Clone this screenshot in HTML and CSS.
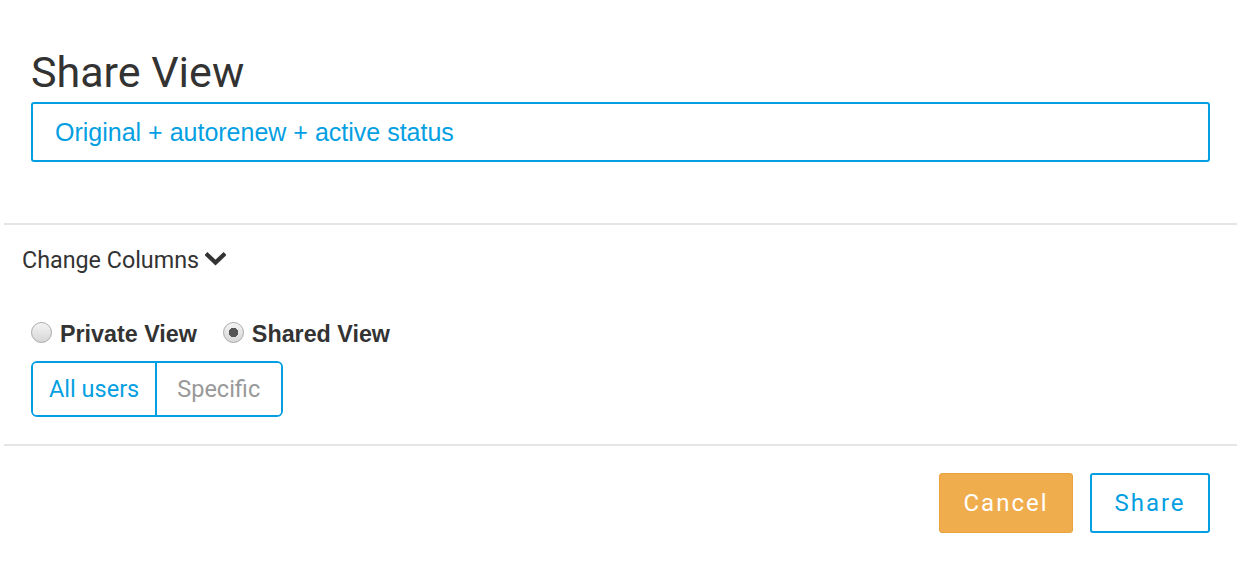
FILE: index.html
```html
<!DOCTYPE html>
<html lang="en">
<head>
    <meta charset="UTF-8">
    <meta name="viewport" content="width=device-width, initial-scale=1.0">
    <title>Share View</title>
<link rel="stylesheet" href="styles.css">
</head>
<body>
    <div class="modal">
        <div class="modal-header">
            <h1 class="titulo">Share View</h1>
            <input class="nombre" type="text" value="Original + autorenew + active status">
        </div>
        <div class="modal-body">
            <a class="columnas" href="#">Change Columns
                <svg class="chevron" width="21" height="14" viewBox="0 0 21 14">
                    <path d="M2.5 3 L10.5 10.5 L18.5 3" fill="none" stroke="#333" stroke-width="4.2" stroke-linecap="square"/>
                </svg>
            </a>
            <div class="visibilidad">
                <label class="opcion"><input type="radio" name="vista"> Private View</label>
                <label class="opcion"><input type="radio" name="vista" checked> Shared View</label>
            </div>
            <div class="grupo">
                <button class="grupo-btn activo">All users</button>
                <button class="grupo-btn">Specific</button>
            </div>
        </div>
        <div class="modal-footer">
            <button class="btn btn-cancel">Cancel</button>
            <button class="btn btn-share">Share</button>
        </div>
    </div>
</body>
</html>
```

FILE: styles.css
```css
* {
    box-sizing: border-box;
}
body {
    margin: 0;
    background-color: white;
    font-family: Roboto, Arial, sans-serif;
    color: #333333;
}
.modal {
    width: 1233px;
    margin-left: 4px;
}
.modal-header {
    padding: 47px 27px 61px 27px;
    border-bottom: 2px solid #e5e5e5;
}
.titulo {
    margin: 0 0 5px 0;
    font-size: 43px;
    font-weight: 400;
    line-height: 50px;
}
.nombre {
    display: block;
    width: 100%;
    height: 60px;
    padding: 0 22px;
    border: 2px solid #049fe2;
    border-radius: 3px;
    font-family: "Liberation Sans", Arial, sans-serif;
    font-size: 25px;
    color: #049fe2;
    outline: none;
}
.modal-body {
    padding: 20px 27px 27px 27px;
    border-bottom: 2px solid #e5e5e5;
}
.columnas {
    display: inline-flex;
    align-items: center;
    gap: 6px;
    margin-left: -9px;
    font-size: 23.3px;
    line-height: 30px;
    color: #333333;
    text-decoration: none;
}
.chevron {
    margin-top: -2px;
}
.visibilidad {
    display: flex;
    gap: 26px;
    margin-top: 44px;
    font-family: "Liberation Sans", Arial, sans-serif;
    font-size: 23.3px;
    font-weight: bold;
    line-height: 30px;
}
.opcion {
    display: flex;
    align-items: center;
    gap: 8px;
}
.opcion input {
    appearance: none;
    width: 21px;
    height: 21px;
    margin: -4px 0 0 0;
    border: 1px solid #a8a8a8;
    border-radius: 50%;
    background: linear-gradient(#f4f4f4, #d6d6d6);
}
.opcion input:checked {
    background: radial-gradient(circle, #555555 0, #555555 4.5px, transparent 5px), linear-gradient(#f4f4f4, #d6d6d6);
}
.grupo {
    display: inline-flex;
    margin-top: 12px;
    border: 2px solid #049fe2;
    border-radius: 6px;
    overflow: hidden;
}
.grupo-btn {
    height: 52px;
    padding: 0 16px 0 16px;
    border: none;
    background-color: white;
    font-family: Roboto, Arial, sans-serif;
    font-size: 23.5px;
    color: #999999;
}
.grupo-btn + .grupo-btn {
    border-left: 2px solid #049fe2;
    padding: 0 21px 0 20px;
}
.grupo-btn.activo {
    color: #049fe2;
}
.modal-footer {
    display: flex;
    justify-content: flex-end;
    gap: 17px;
    padding: 27px 27px;
}
.btn {
    height: 60px;
    padding: 0 22px;
    border-radius: 3px;
    font-family: Roboto, Arial, sans-serif;
    font-size: 24px;
    letter-spacing: 2px;
}
.btn-cancel {
    width: 134px;
    border: 1px solid #eaa23e;
    background-color: #f0ad4e;
    color: white;
}
.btn-share {
    width: 120px;
    border: 2px solid #049fe2;
    background-color: white;
    color: #049fe2;
}
```
